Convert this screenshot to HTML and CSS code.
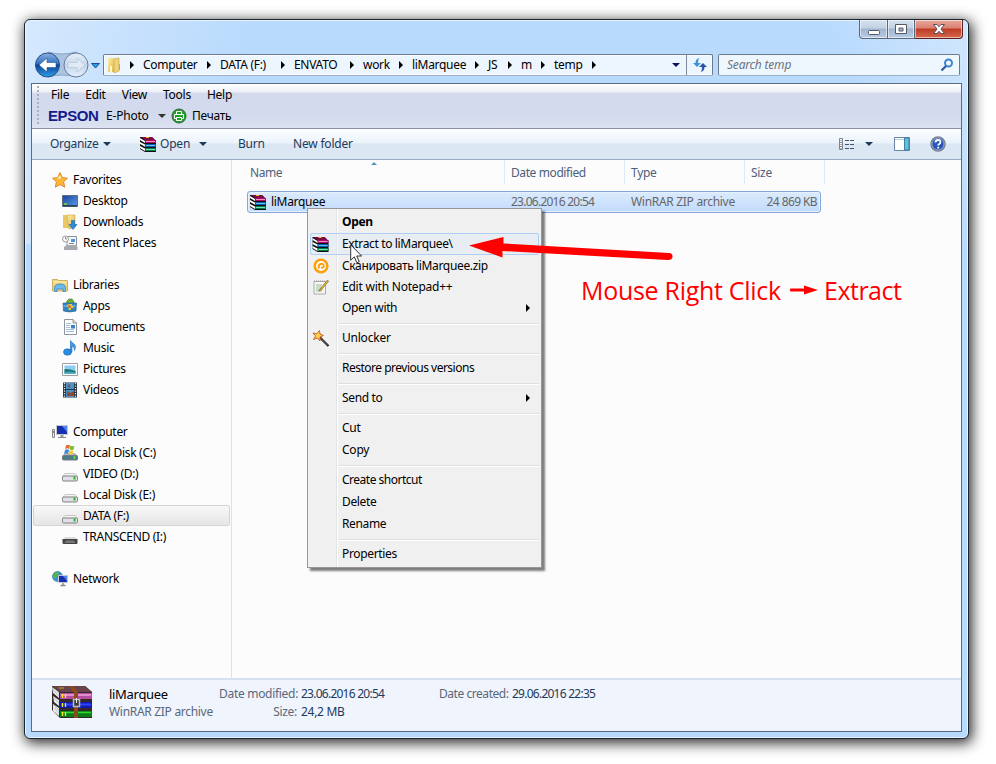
FILE: index.html
```html
<!DOCTYPE html>
<html lang="en">
<head>
<meta charset="utf-8">
<title>temp</title>
<link rel="stylesheet" href="styles.css">
</head>
<body>
<svg class="defs" width="0" height="0" aria-hidden="true">
  <defs>
    <linearGradient id="blueball" x1="0" y1="0" x2="0" y2="1"><stop offset="0" stop-color="#8db4e0"/><stop offset=".45" stop-color="#2f6fc0"/><stop offset=".5" stop-color="#0c3f93"/><stop offset="1" stop-color="#2ba2ec"/></linearGradient>
    <linearGradient id="paleball" x1="0" y1="0" x2="0" y2="1"><stop offset="0" stop-color="#e9f1fb"/><stop offset=".5" stop-color="#c3d5ec"/><stop offset="1" stop-color="#e4f0fd"/></linearGradient>
    <linearGradient id="gold" x1="0" y1="0" x2="1" y2="1"><stop offset="0" stop-color="#fdf0a8"/><stop offset="1" stop-color="#dcb249"/></linearGradient>
    <linearGradient id="screen" x1="0" y1="0" x2="1" y2="1"><stop offset="0" stop-color="#1a3f9c"/><stop offset="1" stop-color="#5aa0ea"/></linearGradient>
    <symbol id="rar" viewBox="0 0 17 17">
      <path d="M0 1h12l4 4v11H5L0 13z" fill="#111"/>
      <path d="M1 1h11l3 3H5z" fill="#7d0a44"/>
      <path d="M5 4h11v3H5z" fill="#a80f62"/><path d="M6 5.500h9" stroke="#f58ccb"/>
      <path d="M5 8h11v3H5z" fill="#0a5cae"/><path d="M6 9.500h9" stroke="#5fc4f4"/>
      <path d="M5 12h11v3H5z" fill="#067a4c"/><path d="M6 13.500h9" stroke="#6fe6b4"/>
      <path d="M0 2l5 3v2L0 4zM0 6l5 2.500v2.200L0 8zM0 10l5 2.500v2.500L0 12z" fill="#fff"/>
      <path d="M6 1.500h3" stroke="#e8b820"/>
    </symbol>
    <symbol id="drive" viewBox="0 0 16 16">
      <path d="M3 7.500h10l2.500 3H.5z" fill="#f4f4f4" stroke="#b5b5b5" stroke-width=".7"/>
      <rect x=".5" y="10" width="15" height="5" rx="1.200" fill="#dfe0e8" stroke="#808080"/>
      <path d="M12.500 10.500v3" stroke="#27b91e" stroke-width="2"/>
    </symbol>
    <symbol id="monitor" viewBox="0 0 16 16">
      <path d="M4.500 1.500h11v9h-11z" fill="#1430b0" stroke="#c6c9ce"/><path d="M10 2h5v6z" fill="#5580ec"/>
      <path d="M8.500 11h3v2h-3z" fill="#999"/><path d="M6 13.500h8" stroke="#888"/>
    </symbol>
  </defs>
</svg>

<div class="window">
  <div class="caption">
    <div class="cap min"><svg width="14" height="8"><rect x="1.500" y="2.500" width="11" height="4" rx="1" fill="#fff" stroke="#535a66"/></svg></div>
    <div class="cap max"><svg width="14" height="12"><path d="M1.500 1.500h11v9h-11zM5 5v3h4V5z" fill="#fff" fill-rule="evenodd" stroke="#535a66"/></svg></div>
    <div class="cap close"><svg width="14" height="12"><path d="M1.500 1.500h3.500l2 2.200 2-2.200h3.500L9 6l3.500 4.500H9L7 8.300 5 10.500H1.500L5 6z" fill="#fff" stroke="#5e4a55"/></svg></div>
  </div>
  <div class="nav">
    <svg class="travel" width="68" height="27" viewBox="0 0 68 27">
      <path d="M14 1Q28 5 42 1l8 6v13l-8 6Q28 22 14 26z" fill="#a9c3e2" stroke="#8aa5c8"/>
      <circle cx="13.500" cy="14" r="12" fill="url(#blueball)" stroke="#2d4f83"/>
      <path d="M5 14L13 7v4.500h9v5h-9V21z" fill="#fff" stroke="#275598" stroke-width=".6"/>
      <circle cx="42" cy="14" r="12" fill="url(#paleball)" stroke="#697b98"/>
      <path d="M51 14L43 7v4.500h-9v5h9V21z" fill="#e0e9f4" stroke="#b4c4da" stroke-width=".7"/>
      <path d="M57.500 12.500h8l-4 4.500z" fill="#2e9be0" stroke="#174f92"/>
    </svg>
    <div class="address">
      <svg width="15" height="16" viewBox="0 0 15 16"><path d="M1 1h6l1 1v13H1z" fill="url(#gold)"/><path d="M7 2l5-1v13l-5 2z" fill="#f0d27a" stroke="#c9a03c" stroke-width=".6"/><path d="M4 9v6" stroke="#fff8cd" stroke-width="2"/><path d="M12.500 7v6" stroke="#7fb4df"/></svg>
      <i class="tri c0"></i><span class="w55">Computer</span>
      <i class="tri"></i><span class="w52">DATA (F:)</span>
      <i class="tri"></i><span class="w47">ENVATO</span>
      <i class="tri"></i><span class="w27">work</span>
      <i class="tri"></i><span class="w54">liMarquee</span>
      <i class="tri"></i><span class="w11">JS</span>
      <i class="tri"></i><span class="w11">m</span>
      <i class="tri"></i><span class="w29">temp</span>
      <i class="tri"></i>
      <i class="down end"></i>
      <div class="refresh"><svg width="16" height="16" viewBox="0 0 16 16"><path d="M7 1Q3.500 2 3.500 6H1l4 4 4-4H6Q6 3 7 1z" fill="#3c91d8" /><path d="M9 15q3.500-1 3.500-5H15l-4-4-4 4h3q0 3-1 5z" fill="#2a55a5"/></svg></div>
    </div>
    <div class="search"><em>Search temp</em><svg width="14" height="14" viewBox="0 0 14 14"><circle cx="8.500" cy="5" r="3.500" fill="#eef7ff" stroke="#3c86cf" stroke-width="2"/><path d="M6 8l-4.500 4.500" stroke="#2a57a4" stroke-width="2.200"/></svg></div>
  </div>

  <div class="client">
    <div class="band">
      <div class="menus"><span>File</span><span>Edit</span><span>View</span><span>Tools</span><span>Help</span></div>
      <div class="epson"><b>EPSON</b><span class="ephoto">E-Photo</span><i class="down dark"></i>
        <svg width="16" height="16" viewBox="0 0 16 16"><circle cx="8" cy="8" r="7" fill="#20a02a" stroke="#35663a"/><path d="M5.500 6V3.500h5V6M5.500 10.500h-2V6.500h9v4h-2M5.500 9.500h5v3h-5z" fill="none" stroke="#fff"/></svg>
        <span>Печать</span></div>
    </div>
    <div class="toolbar">
      <span class="organize">Organize</span><i class="down navy"></i>
      <svg class="tbrar" width="17" height="17"><use href="#rar"/></svg><span class="open">Open</span><i class="down navy"></i>
      <span class="burn">Burn</span><span class="newf">New folder</span>
      <svg class="views" width="16" height="13" viewBox="0 0 16 13"><path d="M.5.500h3v11h-3zM.5 4.500h3M.5 8.500h3" fill="#fff" stroke="#7e8490"/><path d="M2 2v1M2 10v1" stroke="#666"/><path d="M2 6v1" stroke="#c22"/><path d="M6 2.500h4M11 2.500h4M6 6.500h4M11 6.500h4M6 10.500h4M11 10.500h4" stroke="#44566f"/></svg>
      <i class="down navy"></i>
      <svg class="preview" width="17" height="15" viewBox="0 0 17 15"><path d="M.5.500h15v13H.5z" fill="#fff" stroke="#6a83a4"/><path d="M1 2.500h10" stroke="#b9cde4" /><path d="M10.500 1h4.500v12h-4.500z" fill="#62c1dd" stroke="#3d7fa5"/></svg>
      <svg class="help" width="16" height="16" viewBox="0 0 16 16"><circle cx="8" cy="8" r="7" fill="#2a55b8" stroke="#77808d" stroke-width="1.500"/><circle cx="8" cy="8" r="6" fill="none" stroke="#c5d2e8" stroke-width=".6"/><path d="M5.500 6.500q0-2.500 2.500-2.500t2.500 2q0 1.200-1.300 2Q8.200 8.500 8.200 9.600M8.200 10.700v1.700" fill="none" stroke="#fff" stroke-width="1.800"/></svg>
    </div>

    <div class="main">
      <div class="side">
        <div class="row top"><svg viewBox="0 0 16 16"><path d="M8 .6l2.300 5 5.200.6-3.900 3.600 1.100 5.400L8 12.500l-4.700 2.700 1.100-5.400L.5 6.200l5.200-.6z" fill="#fbb638" stroke="#e2801e" stroke-width=".9"/><path d="M8 3l1.300 3.500L5 7z" fill="#fff3b2"/></svg><span>Favorites</span></div>
        <div class="row"><svg viewBox="0 0 16 16"><path d="M.5 2.500h15v11H.5z" fill="url(#screen)" stroke="#5d6f85"/><path d="M1 12h14v1.500H1z" fill="#26405f"/><path d="M2 11h3" stroke="#7ed44b" stroke-width="1.500"/></svg><span>Desktop</span></div>
        <div class="row"><svg viewBox="0 0 16 16"><path d="M1 1h6l1 2v11H1z" fill="#e8c867"/><path d="M5 1h8v12l-6 2z" fill="url(#gold)" stroke="#cda64a" stroke-width=".6"/><path d="M9.500 6.500h3v4H15L11 15.500 7 10.500h2.500z" fill="#2b8be0" stroke="#1d63ae" stroke-width=".6"/></svg><span>Downloads</span></div>
        <div class="row"><svg viewBox="0 0 16 16"><path d="M5 1.500h9.500v9H5z" fill="#f4f8fc" stroke="#8b929b"/><path d="M9 4h4v3H9z" fill="#4f95dd"/><path d="M2 12l3-2h9l1.500 2v3H2z" fill="#a5a9ae"/><circle cx="3.500" cy="4" r="3" fill="#fff" stroke="#9a9a9a"/><path d="M3.500 2v2h1.500M7 8.500h5" fill="none" stroke="#666" stroke-width=".8"/></svg><span>Recent Places</span></div>
        <div class="row gap"></div>
        <div class="row top"><svg viewBox="0 0 16 16"><path d="M.5 14V2.500h5l1 1h9V14z" fill="#f0d77f" stroke="#c5a144" stroke-width=".8"/><path d="M1 5h14" stroke="#fff5c0"/><path d="M2.500 14.500V11q0-4 5.500-4t5.500 4v3.500H11V12H5v2.500z" fill="#6eb9ee" stroke="#2a7ebf" stroke-width=".7"/></svg><span>Libraries</span></div>
        <div class="row"><svg viewBox="0 0 16 16"><path d="M5 3l2-2h3l2 3v3H4z" fill="#65b732" stroke="#356a20" stroke-width=".6"/><path d="M1 5h13.500L14 13q-6.500 2-12.500 0z" fill="#3183c4" stroke="#235a88" stroke-width=".6"/><path d="M1.500 8h12" stroke="#89c3ee"/><path d="M7 6h3v2h1.500v2H9v2H6.500V9H5V7z" fill="#e6c92e"/><path d="M7 7v2h2" stroke="#d0272c" fill="none"/></svg><span>Apps</span></div>
        <div class="row"><svg viewBox="0 0 16 16"><path d="M2.500.500H11l3.500 3.500v11.500h-12z" fill="#fff" stroke="#8d949c"/><path d="M11 .5V4h3.500" fill="#ddd" stroke="#8d949c"/><path d="M4 4.500h5M4 6.500h4M4 8.500h4M4 10.500h8M4 12.500h8" stroke="#9ebfe0"/><path d="M9 6h4v3.500H9z" fill="#3f7fc4"/></svg><span>Documents</span></div>
        <div class="row"><svg viewBox="0 0 16 16"><ellipse cx="5.500" cy="12" rx="4" ry="3.200" fill="#2b8ee2" stroke="#1864b4" stroke-width=".6"/><path d="M8.500 12V.5q1.200 2 3.500 3.500 2.500 2 .5 6.500.5-3.500-2.500-4.500V12z" fill="#3e9bea" stroke="#1b68b8" stroke-width=".6"/></svg><span>Music</span></div>
        <div class="row"><svg viewBox="0 0 16 16"><path d="M.5 2.500h15v12H.5z" fill="#fff" stroke="#9a9fa5"/><path d="M2.500 4.500h11v8h-11z" fill="#8bcdf2"/><path d="M2.500 8q6 0 11 2v2.500h-11z" fill="#1b7668"/><path d="M2.500 11q6-1 11 .5v1h-11z" fill="#43a4cb"/></svg><span>Pictures</span></div>
        <div class="row"><svg viewBox="0 0 16 16"><path d="M1 .5h14v15H1z" fill="#26333c"/><path d="M4 1h8v6H4zM4 8h8v7H4z" fill="#4d91c9"/><path d="M5 9l3 2 4-2v5H5zM5 4l3-2v4z" fill="#8b4b33"/><path d="M2.500 1v14M13.500 1v14" stroke="#dde5ea" stroke-width="1.300" stroke-dasharray="1.300 1.200"/></svg><span>Videos</span></div>
        <div class="row gap"></div>
        <div class="row top"><svg viewBox="0 0 16 16"><use href="#monitor"/><path d="M.5 5.500h2v8h-2z" fill="#eee" stroke="#888"/><path d="M1.500 7v2" stroke="#38b338"/></svg><span>Computer</span></div>
        <div class="row"><svg viewBox="0 0 16 16"><path d="M3 8h10l2.500 3H.5z" fill="#aeb9bd"/><rect x=".5" y="10.500" width="15" height="4.500" rx="1" fill="#4b7f86" stroke="#778"/><path d="M12.500 11v3" stroke="#5fe04a" stroke-width="1.500"/><path d="M4 .5q2-1.500 4 0L7 4Q5.500 2.500 3 4z" fill="#e8682a"/><path d="M8.500.500q2 1.500 4 .3L11.500 4.500Q9.500 6 7.500 4z" fill="#7dba35"/><path d="M3 5q2-1.500 4 0L6 9Q4.500 7.500 2 9z" fill="#3f86dd"/><path d="M7.500 5q2 1.500 4 .3L10.500 9Q8.500 10 6.500 9z" fill="#f6cb31"/></svg><span>Local Disk (C:)</span></div>
        <div class="row"><svg><use href="#drive"/></svg><span>VIDEO (D:)</span></div>
        <div class="row"><svg><use href="#drive"/></svg><span>Local Disk (E:)</span></div>
        <div class="row sel"><svg><use href="#drive"/></svg><span>DATA (F:)</span></div>
        <div class="row"><svg viewBox="0 0 16 16"><path d="M3 8h10l2.500 3H.5z" fill="#ddd"/><path d="M.5 10h15v4q0 1-1 1h-13q-1 0-1-1z" fill="#444"/><path d="M2.500 14l1.500-2.500h8l1.500 2.500z" fill="#777"/></svg><span>TRANSCEND (I:)</span></div>
        <div class="row gap"></div>
        <div class="row top"><svg viewBox="0 0 16 16"><circle cx="5.500" cy="5.500" r="5" fill="#3b94d8" stroke="#2a6eb0" stroke-width=".6"/><path d="M2 2q3-2 5 0L5 5 3 8Q0 5 2 2z" fill="#52b843"/><path d="M6.500 4.500h9v7h-9z" fill="#1430b0" stroke="#c6c9ce"/><path d="M11 5h4v5z" fill="#5580ec"/><path d="M11 12v2M8.500 14.500h5" stroke="#888" stroke-width="1.300"/></svg><span>Network</span></div>
      </div>

      <div class="list">
        <div class="head"><div class="h1">Name<i class="sort"></i></div><div class="h2">Date modified</div><div class="h3">Type</div><div class="h4">Size</div></div>
        <div class="file"><svg width="17" height="17"><use href="#rar"/></svg><span class="fname">liMarquee</span><span class="fdate date">23.06.2016 20:54</span><span class="ftype">WinRAR ZIP archive</span><span class="fsize">24 869 KB</span></div>
      </div>
    </div>

    <div class="details">
      <svg class="bigrar" width="41" height="34" viewBox="0 0 41 34">
        <path d="M0 1h33l7 6v26H8L0 25z" fill="#35282a"/><path d="M0 1h33l7 6H8z" fill="#684347"/>
        <path d="M0 2l7 5v6L1 8zM1 11l6 4v6l-5-4zM1 19l6 4v8l-6-5z" fill="#e4eaea"/>
        <path d="M0 2l7 6M1 5l6 6M1 12l6 6M2 20l5 5M3 23l4 5" stroke="#a2afb2" stroke-width=".6"/>
        <path d="M8 8h32v6H8z" fill="#b84da0"/><path d="M9 10h30" stroke="#f0a0dc" stroke-width="1.500"/>
        <path d="M8 17h32v6H8z" fill="#111ab0"/><path d="M9 19.500h30" stroke="#3244ff" stroke-width="2"/>
        <path d="M8 26h32v6H8z" fill="#0a7e16"/><path d="M9 27.500h30" stroke="#2cda2c" stroke-width="1.500"/>
        <path d="M10.500 9v4M13.500 9v4M10.500 18v4M13.500 18v4M10.500 27v4M13.500 27v4" stroke="#f3ea24" stroke-width="1.300"/><path d="M7 3h5" stroke="#c9a91c"/>
        <path d="M17 1h4l5 6v26h-4V8z" fill="#8b4a20"/><rect x="21.500" y="14.500" width="6" height="7" fill="#3b3b3b" stroke="#bcbcbc" stroke-width="1.500"/><path d="M24.500 13v5" stroke="#eee"/>
      </svg>
      <div class="dname"><span>liMarquee</span><span class="g">WinRAR ZIP archive</span></div>
      <div class="dlabels"><span>Date modified:</span><span>Size:</span></div>
      <div class="dvals"><span class="date">23.06.2016 20:54</span><span>24,2 MB</span></div>
      <div class="dcreated">Date created:</div><div class="dvals2 date">29.06.2016 22:35</div>
    </div>
  </div>
</div>

<div class="context">
  <div class="item bold"><span>Open</span></div>
  <div class="item hot"><svg width="17" height="17"><use href="#rar"/></svg><span>Extract to liMarquee\</span></div>
  <div class="item"><svg width="16" height="16" viewBox="0 0 16 16"><circle cx="8" cy="8" r="6.300" fill="#fff" stroke="#ff9d0a" stroke-width="2.600"/><path d="M6 10.500Q4.800 7 7.500 6t3.300 2q0 2.200-2.800 1.500" fill="none" stroke="#ff9d0a" stroke-width="1.900"/></svg><span>Сканировать liMarquee.zip</span></div>
  <div class="item s21"><svg width="16" height="16" viewBox="0 0 16 16"><path d="M1 2.500h11.500v12.500H1z" fill="#f7f7f0" stroke="#aaa"/><path d="M1 2h12" stroke="#999" stroke-dasharray="1 1"/><path d="M3 6h6M3 8h5M3 10h7M3 12h6" stroke="#9bbb9b"/><path d="M14.500 1L7 10l-1 2 2-1 7.500-8.500z" fill="#e9b52a" stroke="#6b5b2d" stroke-width=".6"/></svg><span class="loose">Edit with Notepad++</span></div>
  <div class="item s21"><span>Open with</span><i class="tri"></i></div>
  <hr>
  <div class="item"><svg width="17" height="17" viewBox="0 0 17 17"><path d="M7 7l9 9" stroke="#1a1a1a" stroke-width="2.200"/><path d="M8 8l7 7" stroke="#999" stroke-width=".7"/><path d="M7 .5l.5 3.500L11 5.500 7.500 7l0 4L5 8 1 9.500 3 6 .5 3l3.800.8z" fill="#ffcf4a" stroke="#c45b22" stroke-width=".9"/></svg><span class="loose">Unlocker</span></div>
  <hr>
  <div class="item"><span class="tight">Restore previous versions</span></div>
  <hr>
  <div class="item"><span>Send to</span><i class="tri"></i></div>
  <hr>
  <div class="item"><span class="loose">Cut</span></div>
  <div class="item"><span class="loose">Copy</span></div>
  <hr>
  <div class="item"><span class="tight">Create shortcut</span></div>
  <div class="item"><span>Delete</span></div>
  <div class="item"><span>Rename</span></div>
  <hr>
  <div class="item"><span>Properties</span></div>
</div>

<svg class="cursor" width="13" height="20" viewBox="0 0 13 20"><path d="M.7.900v15.300l3.600-3.400 2.600 5.900 2.400-1-2.600-5.700h5z" fill="#fff" stroke="#333"/></svg>
<svg class="arrow" width="206" height="28" viewBox="0 0 206 28"><path d="M1 10.500L35.500 2v6.500L201 18q4 .5 3.500 4-.5 3-4.500 3L34.500 16v6.500z" fill="#f00"/></svg>
<div class="note"><span class="n1">Mouse Right Click</span><svg width="29" height="10" viewBox="0 0 29 10"><path d="M1.500 3.500H15V.500L29 5 15 9.500v-3H1.500q-1.500-1.500 0-3z" fill="#f00"/></svg><span class="n2">Extract</span></div>
</body>
</html>
```
FILE: styles.css
```css
* { box-sizing: border-box; }
body {
  margin: 0; width: 996px; height: 764px; overflow: hidden; background: #fff; position: relative;
  font: 12px/16px "Noto Sans", "Open Sans", sans-serif; letter-spacing: -0.3px; color: #000;
}
.defs { position: absolute; }
span, em { white-space: nowrap; }
svg { flex: none; display: block; }
i { flex: none; }
.date { letter-spacing: -0.75px; white-space: nowrap; }
.loose { letter-spacing: -0.22px; }
.tight { letter-spacing: -0.5px; }

.window {
  margin: 19px 0 0 24px; float: left; width: 945px; height: 720px;
  border: 1px solid #1b2530; border-radius: 6px; padding: 0 6px 6px 6px;
  box-shadow: inset 0 0 0 1px #e8f4ff, 2px 3px 14px 1px rgba(0,0,0,.85);
  background:
    linear-gradient(100deg, #d6e9fe 0, #cde4fd 60px, rgba(184,217,251,0) 230px) 0 0 / 100% 224px no-repeat,
    linear-gradient(60deg, rgba(184,217,251,0) 86%, #d2e7fd 100%) 0 0 / 100% 224px no-repeat,
    #b8dafd;
}
.caption { display: flex; justify-content: flex-end; height: 34px; margin-right: -1px; }
.cap {
  height: 19px; display: flex; align-items: center; justify-content: center;
  border: 1px solid #59687c; border-top: 0; box-shadow: inset 0 0 0 1px rgba(255,255,255,.55);
  background: linear-gradient(#d5e1ef 0, #c2d1e3 45%, #a1b4cd 50%, #b7cce5 100%);
}
.min { width: 29px; border-radius: 0 0 0 4px; padding-top: 5px; }
.max { width: 27px; border-left: 0; padding-bottom: 1px; }
.close { width: 48px; border-color: #5d1f20; border-left: 0; border-radius: 0 0 4px 0; background: linear-gradient(#e9a89c 0, #d8816f 45%, #bd3a23 50%, #d6694d 100%); }
.nav { display: flex; height: 29px; padding-left: 3px; }
.travel { margin-top: -3px; }
.address {
  display: flex; align-items: center; width: 610px; height: 22px; margin-left: 1px; padding-left: 3px;
  border: 1px solid #6e7c8e; border-bottom-color: #9eb0c4; background: #edf5fe; border-radius: 2px;
  box-shadow: inset 0 0 0 1px #f8fbff;
}
.tri { width: 0; height: 0; border: 4px solid transparent; border-left: 4px solid #000; border-right: 0; margin: 0 9px; }
.tri.c0 { margin-left: 8px; }
.down { width: 0; height: 0; border: 4px solid transparent; border-top: 4px solid #0a1060; border-bottom: 0; }
.down.navy { border-top-color: #1e395b; }
.down.dark { border-top-color: #333; }
.end { margin-left: auto; margin-right: 6px; }
.w55 { width: 55px; } .w52 { width: 52px; } .w47 { width: 47px; } .w27 { width: 27px; }
.w54 { width: 54px; } .w11 { width: 11px; } .w29 { width: 29px; }
.refresh { width: 26px; height: 20px; border-left: 1px solid #7f8c9d; display: flex; align-items: center; justify-content: center; }
.search {
  display: flex; align-items: center; justify-content: space-between; width: 242px; height: 22px; margin-left: 5px; padding: 0 5px 0 8px;
  border: 1px solid #6e7c8e; border-bottom-color: #9eb0c4; border-radius: 2px; background: #eef6fe; color: #6b7480; letter-spacing: -0.2px;
}

.client { width: 931px; height: 649px; border: 1px solid #5c6b80; background: #fcfcfd; display: flex; flex-direction: column; }
.band { height: 45px; padding-left: 16px; border-bottom: 1px solid #8a92a8; background: linear-gradient(#fff 0, #eef0f8 8px, #d3daed 9px, #d3daed 32px, #dde3f2 44px); position: relative; }
.band::before { content: ""; position: absolute; left: 5px; top: 2px; width: 2px; height: 40px; background: repeating-linear-gradient(#aab0bd 0 2px, transparent 2px 4px); }
.menus { display: flex; gap: 16px; height: 21px; align-items: center; padding: 1px 0 0 3px; letter-spacing: -0.25px; }
.epson { display: flex; align-items: center; height: 22px; }
.epson b { font: bold 15px/16px "Liberation Sans", sans-serif; color: #141c8c; width: 58px; letter-spacing: -0.4px; }
.ephoto { width: 52px; letter-spacing: -0.2px; }
.epson svg { margin: 0 5px 0 5px; }
.toolbar { height: 31px; display: flex; align-items: center; padding-left: 18px; color: #1e395b; border-bottom: 1px solid #97abc6; background: linear-gradient(#fcfeff 0, #eaf3fb 14px, #dce7f4 15px, #dce7f4 100%); letter-spacing: -0.2px; }
.organize { width: 53px; letter-spacing: -0.35px; } .tbrar { margin-left: 29px; } .open { width: 39px; margin-left: 3px; }
.burn { margin-left: 31px; width: 55px; } .views { margin-left: auto; }
.views + .down { margin-left: 10px; } .preview { margin-left: 21px; } .help { margin: 0 15px 0 19px; }

.main { flex: 1; display: flex; min-height: 0; }
.side { width: 200px; border-right: 1px solid #d9e2ee; padding-top: 9px; }
.row { display: flex; align-items: center; height: 21px; padding-left: 30px; gap: 5px; }
.row.top { padding-left: 20px; }
.row svg { width: 16px; height: 16px; }
.sel { margin: 0 1px; padding-left: 28px; border: 1px solid #d5d5d5; border-radius: 2px; background: linear-gradient(#f8f8f8, #e5e5e5); }
.list { flex: 1; padding-left: 15px; }
.head { display: flex; height: 31px; color: #4c607a; line-height: 26px; }
.head > div { height: 24px; border-right: 1px solid #e0eaf5; position: relative; padding-left: 6px; }
.head .h1 { width: 258px; padding-left: 3px; }
.h1, .h2 { letter-spacing: -0.4px; }
.h2, .h3 { width: 120px; } .h4 { width: 80px; }
.sort { position: absolute; left: 124px; top: 2px; border: 3px solid transparent; border-top: 0; border-bottom: 3px solid #5a94ba; }
.file { display: flex; align-items: center; height: 22px; width: 574px; padding: 0 3px 0 2px; border: 1px solid #84a9d8; border-radius: 3px; background: linear-gradient(#dcebfd, #c1dbfc); color: #666; box-shadow: inset 0 0 0 1px #e5f1fe; }
.fname { width: 240px; margin-left: 4px; color: #000; } .fdate { width: 120px; } .fsize { margin-left: auto; letter-spacing: -0.6px; }

.details { height: 53px; flex: none; display: flex; background: #f0f4fc; border-top: 2px solid #d5e1f0; padding: 5px 0 0 20px; line-height: 18px; color: #1e395b; }
.details span { display: block; }
.dname { margin-left: 16px; width: 110px; color: #000; }
.dname .g, .dlabels, .dcreated { color: #5a6779; }
.dname > span:first-child { font-size: 13px; }
.dlabels { width: 78px; text-align: right; } .dvals { margin-left: 4px; width: 138px; }
.dcreated { width: 69px; white-space: nowrap; letter-spacing: -0.45px; } .dvals2 { margin-left: 4px; }

.context { position: absolute; left: 307px; top: 208px; width: 235px; height: 360px; border: 1px solid #979797; padding: 2px; background: linear-gradient(90deg, #f1f1f1 28px, #e2e3e3 28px 29px, #fff 29px 30px, #f0f0f0 30px); box-shadow: 3px 3px 2px rgba(0,0,0,.5); letter-spacing: -0.35px; }
.item { height: 22px; display: flex; align-items: center; padding-left: 31px; position: relative; border: 1px solid transparent; border-radius: 2px; }
.item.s21 { height: 21px; padding-bottom: 1px; }
.item svg { margin: 0 12px 0 -30px; width: 18px; }
.item .tri { margin: 0 8px 0 auto; }
.bold { font-weight: 700; }
.hot { border-color: #aecff7; background: rgba(218,232,250,.35); }
.context hr { height: 2px; margin: 4px 0 2px 28px; border: 0; border-top: 1px solid #dfdfdf; border-bottom: 1px solid #fff; }
.cursor { position: absolute; left: 350px; top: 244px; }
.arrow { position: absolute; left: 468px; top: 235px; }
.note { position: absolute; left: 581px; top: 272px; height: 36px; display: flex; align-items: center; color: #f00; font: 25px/36px "Open Sans", sans-serif; letter-spacing: -0.3px; }
.n1 { width: 208px; } .n2 { margin-left: 6px; letter-spacing: -0.5px; }
```
